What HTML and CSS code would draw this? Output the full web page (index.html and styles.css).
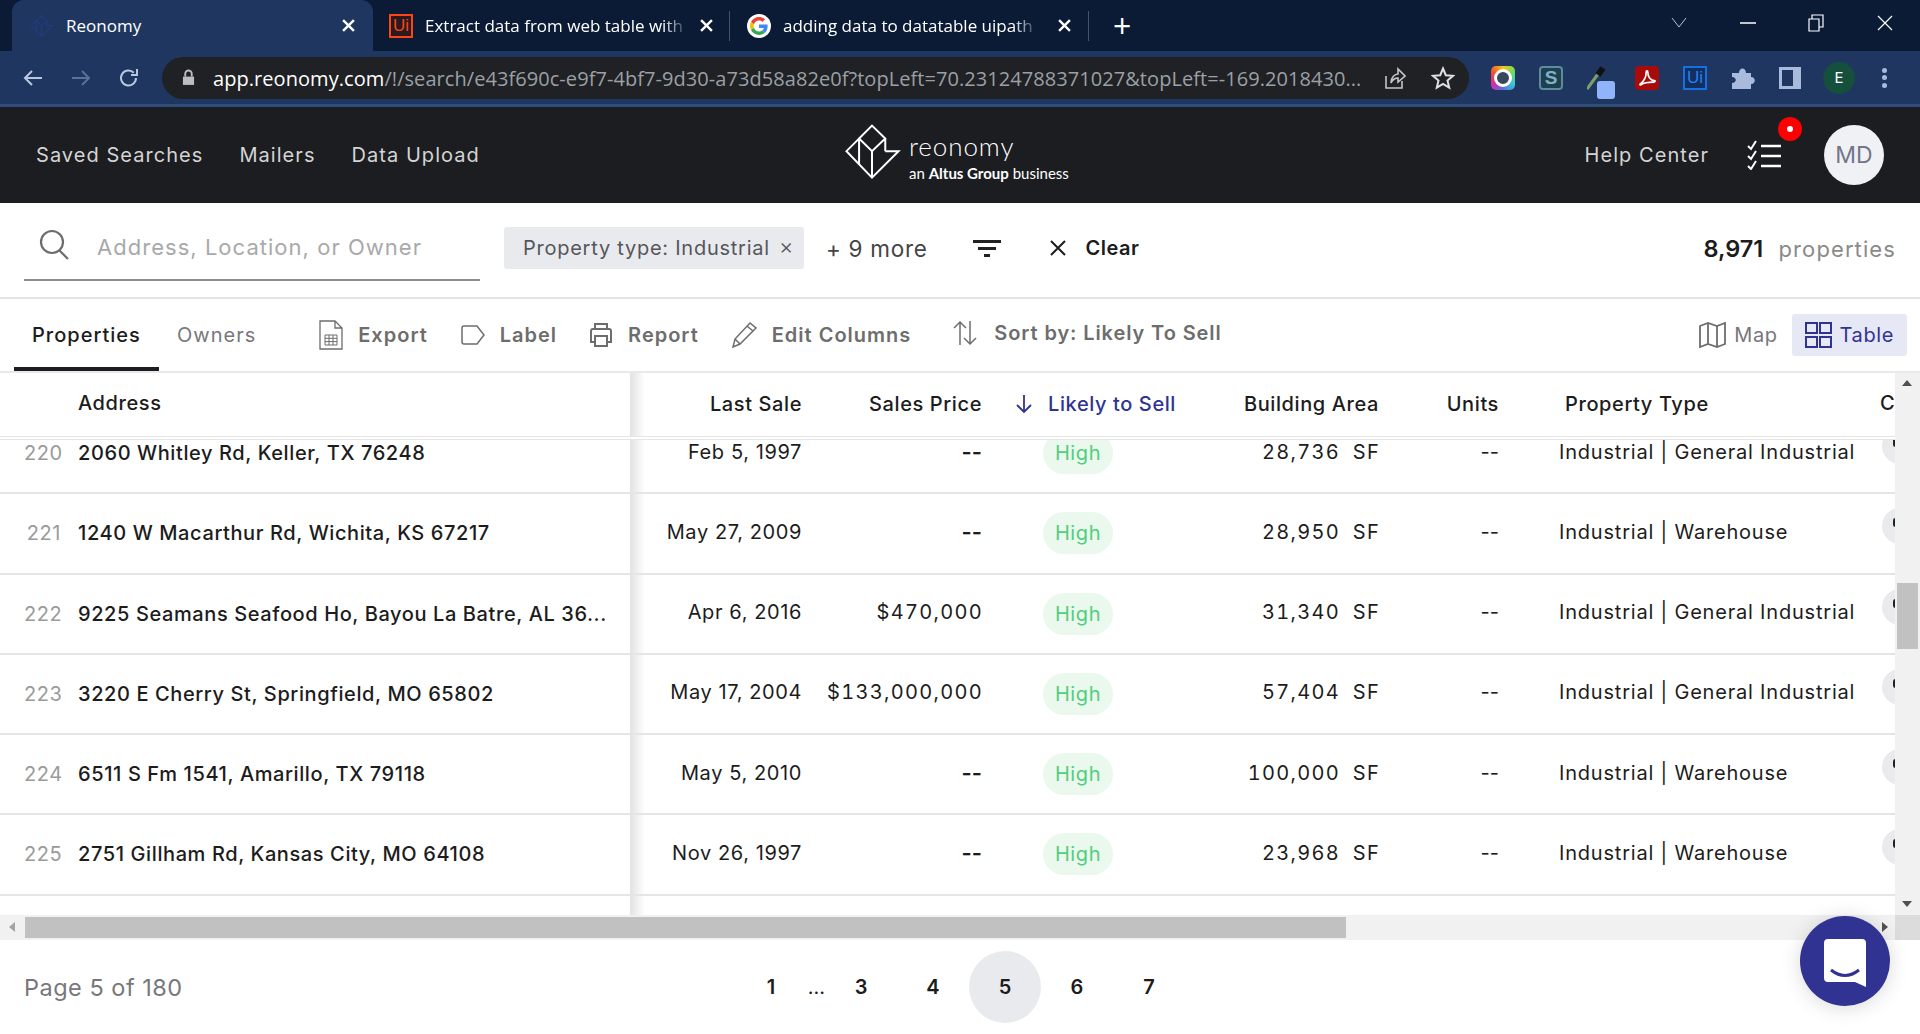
FILE: index.html
```html
<!DOCTYPE html>
<html>
<head>
    <title>Reonomy</title>
    <link rel="stylesheet" href="styles.css">
</head>
<body>
    <div class="tabstrip">
        <div class="tab tab-active">
            <svg class="fav" viewBox="70 40 180 175"><path d="M157 48L80 125L157 205L237 125H197M157 48L197 87L157 125L118 87ZM118 87V165M157 125V205M197 87V125" fill="none" stroke="#233a7c" stroke-width="9"/></svg>
            <span class="tab-title">Reonomy</span>
            <svg class="tab-x" viewBox="0 0 12 12"><path d="M1 1L11 11M11 1L1 11" stroke="#fff" stroke-width="2.200"/></svg>
        </div>
        <div class="tab tab-two">
            <span class="fav fav-ui">Ui</span>
            <span class="tab-title tab-fade">Extract data from web table with</span>
            <svg class="tab-x" viewBox="0 0 12 12"><path d="M1 1L11 11M11 1L1 11" stroke="#fff" stroke-width="2.200"/></svg>
        </div>
        <div class="tab tab-three">
            <span class="fav fav-g">
                <svg viewBox="0 0 48 48"><path fill="#EA4335" d="M24 9.500c3.500 0 6.700 1.200 9.200 3.600l6.900-6.900C35.900 2.400 30.500 0 24 0 14.600 0 6.500 5.400 2.600 13.200l8 6.200C12.400 13.700 17.700 9.500 24 9.500z"/><path fill="#4285F4" d="M47 24.500c0-1.600-.1-3.100-.4-4.500H24v9h12.900c-.6 3-2.200 5.500-4.700 7.200l7.700 6c4.500-4.200 7.100-10.300 7.100-17.700z"/><path fill="#FBBC05" d="M10.500 28.600c-.5-1.400-.8-3-.8-4.600s.3-3.200.8-4.600l-8-6.200C.9 16.500 0 20.100 0 24s.9 7.500 2.600 10.800l7.900-6.200z"/><path fill="#34A853" d="M24 48c6.500 0 11.900-2.100 15.900-5.800l-7.700-6c-2.200 1.400-4.900 2.300-8.200 2.300-6.300 0-11.600-4.200-13.500-9.900l-8 6.200C6.500 42.600 14.600 48 24 48z"/></svg>
            </span>
            <span class="tab-title tab-fade">adding data to datatable uipath</span>
            <svg class="tab-x" viewBox="0 0 12 12"><path d="M1 1L11 11M11 1L1 11" stroke="#fff" stroke-width="2.200"/></svg>
        </div>
        <span class="new-tab">+</span>
        <div class="win-controls">
            <svg width="16" height="12" viewBox="0 0 16 12"><path d="M1 1L8 10L15 1" fill="none" stroke="#b8c2d6" stroke-width="1"/></svg>
            <svg width="16" height="12" viewBox="0 0 16 12"><path d="M0 6H16" stroke="#fff" stroke-width="1.500"/></svg>
            <svg width="16" height="18" viewBox="0 0 16 18"><path d="M1 5H11V17H1ZM4 5V1H15V13H11" fill="none" stroke="#fff" stroke-width="1.200"/></svg>
            <svg width="16" height="16" viewBox="0 0 16 16"><path d="M1 1L15 15M15 1L1 15" stroke="#fff" stroke-width="1.200"/></svg>
        </div>
    </div>

    <div class="browserbar">
        <svg class="nav-ic" viewBox="0 0 24 24"><path d="M21 12H4M11 5L4 12L11 19" fill="none" stroke="#b9c8e2" stroke-width="2"/></svg>
        <svg class="nav-ic" viewBox="0 0 24 24"><path d="M3 12H20M13 5L20 12L13 19" fill="none" stroke="#5d7095" stroke-width="2"/></svg>
        <svg class="nav-ic" viewBox="0 0 24 24"><path d="M19 12A7.500 7.500 0 1 1 16.800 6.700M20 3V9H14" fill="none" stroke="#b9c8e2" stroke-width="2"/></svg>
        <div class="omnibox">
            <svg class="lock" viewBox="0 0 14 18"><path d="M1 8H13V17H1Z" fill="#bdbdbd"/><path d="M3.500 8V5A3.500 3.500 0 0 1 10.500 5V8" fill="none" stroke="#bdbdbd" stroke-width="2"/></svg>
            <span class="url"><b>app.reonomy.com</b>/!/search/e43f690c-e9f7-4bf7-9d30-a73d58a82e0f?topLeft=70.23124788371027&amp;topLeft=-169.2018430...</span>
            <svg class="omni-ic" viewBox="0 0 24 24"><path d="M4 10V22H20V15M9 17C9 11 13 8 16 8V3L23 10L16 16V12C13 12 11 13 9 17Z" fill="none" stroke="#c4c7c5" stroke-width="1.600"/></svg>
            <svg class="omni-ic" viewBox="0 0 24 24"><path d="M12 2.500L14.800 9.200L22 9.800L16.500 14.500L18.200 21.600L12 17.800L5.800 21.600L7.500 14.500L2 9.800L9.200 9.200Z" fill="none" stroke="#dfe1e5" stroke-width="2"/></svg>
        </div>
        <div class="ext-row">
            <span class="ext ext-lens"><i></i></span>
            <span class="ext ext-s">S</span>
            <span class="ext ext-drop">
                <svg viewBox="0 0 24 24"><path d="M0 23L11 8" stroke="#7d9f6a" stroke-width="3"/><path d="M11 9L16 2" stroke="#111" stroke-width="6"/></svg>
                <i></i>
            </span>
            <span class="ext ext-pdf"><svg viewBox="0 0 24 24"><path d="M4 19C8 16 11 10 11 5C11 3 13 3 13 5C13 10 16 15 21 15C22 15 22 17 20 17C15 17 9 17 5 20C4 21 3 20 4 19Z" fill="none" stroke="#fff" stroke-width="2"/></svg></span>
            <span class="ext ext-ui">Ui</span>
            <span class="ext ext-puzzle"><svg viewBox="0 0 24 24"><path d="M1 7H8C8 1 15 1 15 7H20V11C25 11 25 18 20 18V23H1V17C6 17 6 11 1 11Z" fill="#a9bbdc"/></svg></span>
            <span class="ext ext-panel"><i></i></span>
            <span class="ext ext-avatar">E</span>
            <span class="ext ext-dots"><i></i><i></i><i></i></span>
        </div>
    </div>

    <header class="app-head">
        <nav class="app-nav">
            <a>Saved Searches</a>
            <a>Mailers</a>
            <a>Data Upload</a>
        </nav>
        <div class="logo">
            <svg class="logo-mark" viewBox="70 40 180 175"><path d="M157 48L80 125L157 205L237 125H197M157 48L197 87L157 125L118 87ZM118 87V165M157 125V205M197 87V125" fill="none" stroke="#fff" stroke-width="6"/></svg>
            <div class="logo-text">
                <div class="logo-name">reonomy</div>
                <div class="logo-sub">an <b>Altus Group</b> business</div>
            </div>
        </div>
        <div class="head-right">
            <a class="help">Help Center</a>
            <span class="checklist">
                <svg width="36" height="30" viewBox="0 0 36 30"><path d="M1 6L4 9L9 1M1 16L4 19L9 11M1 26L4 29L9 21" fill="none" stroke="#fff" stroke-width="2"/><path d="M14 6H34M14 16H34M14 26H34" stroke="#fff" stroke-width="2.500"/></svg>
                <span class="red-dot"><i></i></span>
            </span>
            <span class="avatar">MD</span>
        </div>
    </header>

    <section class="searchbar">
        <div class="search-field">
            <svg class="search-ic" viewBox="0 0 32 32"><circle cx="14" cy="13" r="11" fill="none" stroke="#6d6d6d" stroke-width="2.200"/><path d="M21 21L30 30" stroke="#6d6d6d" stroke-width="2.200"/></svg>
            <span class="placeholder">Address, Location, or Owner</span>
        </div>
        <div class="chip">Property type: Industrial <span class="chip-x">&#215;</span></div>
        <span class="more">+ 9 more</span>
        <svg class="filter-ic" viewBox="0 0 28 17"><path d="M0 1.500H28M5 8.500H23M11 15.500H17" stroke="#222" stroke-width="3"/></svg>
        <a class="clear">
            <svg width="16" height="16" viewBox="0 0 16 16"><path d="M1 1L15 15M15 1L1 15" stroke="#1c1c1c" stroke-width="2"/></svg>
            Clear
        </a>
        <div class="count"><b>8,971</b> properties</div>
    </section>

    <section class="toolbar">
        <a class="view-tab view-tab-on">Properties</a>
        <a class="view-tab">Owners</a>
        <div class="actions">
            <a class="action">
                <svg width="24" height="30" viewBox="0 0 24 30"><path d="M1 1H16L23 8V29H1ZM16 1V8H23" fill="none" stroke="#6d6d6d" stroke-width="1.300"/><path d="M6 15H18V25H6ZM6 18.300H18M6 21.600H18M10 15V25M14 15V25" fill="none" stroke="#6d6d6d"/></svg>
                Export
            </a>
            <a class="action action-label">
                <svg width="24" height="20" viewBox="0 0 24 20"><path d="M3 1H16L23 10L16 19H3Q1 19 1 17V3Q1 1 3 1Z" fill="none" stroke="#6d6d6d" stroke-width="1.500"/></svg>
                Label
            </a>
            <a class="action action-report">
                <svg width="24" height="26" viewBox="0 0 24 26"><path d="M6 7V2H18V7M5 20H2V9Q2 7 4 7H20Q22 7 22 9V20H19M6 14H18V24H6Z" fill="none" stroke="#6d6d6d" stroke-width="2"/></svg>
                Report
            </a>
            <a class="action action-edit">
                <svg width="26" height="28" viewBox="0 0 26 28"><path d="M2 26L4 18L19 2L25 7L9 23ZM4 18L9 23M16 5L22 10" fill="none" stroke="#6d6d6d" stroke-width="1.500"/></svg>
                Edit Columns
            </a>
            <a class="action action-sort">
                <svg width="24" height="26" viewBox="0 0 24 26"><path d="M7 25V2M1 8L7 2L13 8M17 1V24M11 18L17 24L23 18" fill="none" stroke="#6d6d6d" stroke-width="1.500"/></svg>
                Sort by: Likely To Sell
            </a>
        </div>
        <div class="views">
            <a class="view-btn">
                <svg width="27" height="26" viewBox="0 0 27 26"><path d="M1 4L9 1L18 4L26 1V22L18 25L9 22L1 25ZM9 1V22M18 4V25" fill="none" stroke="#6d6d6d" stroke-width="1.800"/></svg>
                Map
            </a>
            <a class="view-btn view-btn-on">
                <svg width="27" height="26" viewBox="0 0 27 26"><path d="M1 1H12V11H1ZM15 1H26V11H15ZM1 15H12V25H1ZM15 15H26V25H15Z" fill="none" stroke="#303391" stroke-width="2"/></svg>
                Table
            </a>
        </div>
    </section>

    <section class="table-area">
        <div class="table-main">
            <div class="table">
                <div class="row thead">
                    <div class="cell-addr"><span class="addr-num"></span><span class="th-addr">Address</span></div>
                    <div class="c-right">Last Sale</div>
                    <div class="c-right">Sales Price</div>
                    <div class="c-likely">
                        <svg width="16" height="20" viewBox="0 0 16 20"><path d="M8 1V18M1 11L8 18L15 11" fill="none" stroke="#303391" stroke-width="1.800"/></svg>
                        Likely to Sell
                    </div>
                    <div class="c-right">Building Area</div>
                    <div class="c-right">Units</div>
                    <div class="c-type">Property Type</div>
                    <div class="c-last">C</div>
                </div>
                <div class="tbody">
                    <div class="tbody-inner">
                        <div class="row">
                            <div class="cell-addr"><span class="addr-num">220</span><span class="addr">2060 Whitley Rd, Keller, TX 76248</span></div>
                            <div class="c-right">Feb 5, 1997</div>
                            <div class="c-right nil">--</div>
                            <div class="c-badge"><span class="badge">High</span></div>
                            <div class="c-right mono">28,736 SF</div>
                            <div class="c-right dash">--</div>
                            <div class="c-type">Industrial | General Industrial</div>
                            <div class="c-last"><span class="stub"></span></div>
                        </div>
                        <div class="row">
                            <div class="cell-addr"><span class="addr-num">221</span><span class="addr">1240 W Macarthur Rd, Wichita, KS 67217</span></div>
                            <div class="c-right">May 27, 2009</div>
                            <div class="c-right nil">--</div>
                            <div class="c-badge"><span class="badge">High</span></div>
                            <div class="c-right mono">28,950 SF</div>
                            <div class="c-right dash">--</div>
                            <div class="c-type">Industrial | Warehouse</div>
                            <div class="c-last"><span class="stub"></span></div>
                        </div>
                        <div class="row">
                            <div class="cell-addr"><span class="addr-num">222</span><span class="addr">9225 Seamans Seafood Ho, Bayou La Batre, AL 36...</span></div>
                            <div class="c-right">Apr 6, 2016</div>
                            <div class="c-right mono">$470,000</div>
                            <div class="c-badge"><span class="badge">High</span></div>
                            <div class="c-right mono">31,340 SF</div>
                            <div class="c-right dash">--</div>
                            <div class="c-type">Industrial | General Industrial</div>
                            <div class="c-last"><span class="stub"></span></div>
                        </div>
                        <div class="row">
                            <div class="cell-addr"><span class="addr-num">223</span><span class="addr">3220 E Cherry St, Springfield, MO 65802</span></div>
                            <div class="c-right">May 17, 2004</div>
                            <div class="c-right mono">$133,000,000</div>
                            <div class="c-badge"><span class="badge">High</span></div>
                            <div class="c-right mono">57,404 SF</div>
                            <div class="c-right dash">--</div>
                            <div class="c-type">Industrial | General Industrial</div>
                            <div class="c-last"><span class="stub"></span></div>
                        </div>
                        <div class="row">
                            <div class="cell-addr"><span class="addr-num">224</span><span class="addr">6511 S Fm 1541, Amarillo, TX 79118</span></div>
                            <div class="c-right">May 5, 2010</div>
                            <div class="c-right nil">--</div>
                            <div class="c-badge"><span class="badge">High</span></div>
                            <div class="c-right mono">100,000 SF</div>
                            <div class="c-right dash">--</div>
                            <div class="c-type">Industrial | Warehouse</div>
                            <div class="c-last"><span class="stub"></span></div>
                        </div>
                        <div class="row">
                            <div class="cell-addr"><span class="addr-num">225</span><span class="addr">2751 Gillham Rd, Kansas City, MO 64108</span></div>
                            <div class="c-right">Nov 26, 1997</div>
                            <div class="c-right nil">--</div>
                            <div class="c-badge"><span class="badge">High</span></div>
                            <div class="c-right mono">23,968 SF</div>
                            <div class="c-right dash">--</div>
                            <div class="c-type">Industrial | Warehouse</div>
                            <div class="c-last"><span class="stub"></span></div>
                        </div>
                        <div class="row">
                            <div class="cell-addr"></div>
                        </div>
                    </div>
                </div>
            </div>
            <div class="vscroll">
                <i class="arrow-up"></i>
                <span class="vthumb"></span>
                <i class="arrow-down"></i>
            </div>
        </div>
        <div class="hscroll">
            <div class="htrack">
                <i class="arrow-left"></i>
                <span class="hthumb"></span>
                <i class="arrow-right"></i>
            </div>
            <span class="corner"></span>
        </div>
    </section>

    <footer class="pager-row">
        <div class="page-of">Page 5 of 180</div>
        <div class="pager">
            <a class="pg pg-first">1</a>
            <span class="pg-dots">...</span>
            <a class="pg">3</a>
            <a class="pg">4</a>
            <a class="pg pg-on">5</a>
            <a class="pg">6</a>
            <a class="pg">7</a>
        </div>
    </footer>

    <div class="chat-btn">
        <svg width="42" height="48" viewBox="0 0 42 48"><path d="M4 0H38Q42 0 42 4V48L31 43H4Q0 43 0 39V4Q0 0 4 0Z" fill="#fff"/><path d="M7 31Q21 42 35 31" fill="none" stroke="#303391" stroke-width="3"/></svg>
    </div>
</body>
</html>
```
FILE: styles.css
```css
* {
    box-sizing: border-box;
}

body {
    margin: 0;
    height: 1034px;
    overflow: hidden;
    font-family: Inter, "Liberation Sans", sans-serif;
    color: #1c1c1c;
    background-color: #fff;
    display: flex;
    flex-direction: column;
}

/* browser chrome */
.tabstrip {
    height: 51px;
    background-color: #0b1b36;
    display: flex;
    align-items: center;
    padding-left: 12px;
    color: #fff;
    font-family: "Open Sans", sans-serif;
    font-size: 17px;
}

.tab {
    height: 51px;
    display: flex;
    align-items: center;
    position: relative;
}

.tab-active {
    width: 361px;
    padding-left: 18px;
    background-color: #1f3760;
    border-radius: 12px 12px 0 0;
}

.tab-two {
    width: 357px;
    padding-left: 16px;
}

.tab-three {
    width: 359px;
    padding-left: 17px;
}

.tab-two::after,
.tab-three::after {
    content: "";
    position: absolute;
    right: 0;
    top: 11px;
    height: 30px;
    width: 1px;
    background-color: #45526b;
}

.fav {
    width: 24px;
    height: 24px;
    flex-shrink: 0;
}

.fav-ui {
    background-color: #2a1a20;
    border: 2px solid #fa4616;
    color: #fa4616;
    font: 17px/20px "Liberation Sans", sans-serif;
    text-align: center;
}

.fav-g {
    background-color: #fff;
    border-radius: 50%;
    padding: 3px;
    display: flex;
}

.tab-title {
    margin-left: 12px;
    width: 264px;
    white-space: nowrap;
    overflow: hidden;
}

.tab-fade {
    mask-image: linear-gradient(to right, #000 90%, transparent 100%);
    -webkit-mask-image: linear-gradient(to right, #000 90%, transparent 100%);
}

.tab-three .tab-title {
    width: 256px;
}

.tab-x {
    width: 13px;
    height: 13px;
    margin-left: 11px;
    flex-shrink: 0;
}

.tab-active .tab-x {
    margin-left: 12px;
}

.tab-three .tab-x {
    margin-left: 19px;
}

.new-tab {
    margin-left: 24px;
    font-size: 32px;
    line-height: 51px;
}

.win-controls {
    margin-left: auto;
    width: 222px;
    margin-right: 27px;
    display: flex;
    justify-content: space-between;
    align-items: center;
    margin-bottom: 6px;
}

.browserbar {
    height: 56px;
    background-color: #1f3760;
    border-bottom: 3px solid #2f4d7d;
    display: flex;
    align-items: center;
    padding-left: 21px;
}

.nav-ic {
    width: 24px;
    height: 24px;
    margin-right: 24px;
}

.omnibox {
    width: 1307px;
    height: 42px;
    margin-left: -3px;
    background-color: #202124;
    border-radius: 21px;
    display: flex;
    align-items: center;
    padding-left: 20px;
    font-family: "Open Sans", sans-serif;
    font-size: 20px;
    letter-spacing: 0.06px;
    color: #9aa0a6;
}

.lock {
    width: 13px;
    height: 17px;
    margin-right: 18px;
}

.url {
    width: 1159px;
    margin-top: 1px;
    white-space: nowrap;
    overflow: hidden;
}

.url b {
    font-weight: 400;
    color: #fff;
}

.omni-ic {
    width: 24px;
    height: 24px;
    margin-left: 10px;
}

.omni-ic + .omni-ic {
    margin-left: 25px;
}

.ext-row {
    display: flex;
    align-items: center;
    margin-left: 22px;
}

.ext {
    width: 24px;
    height: 24px;
    margin-right: 24px;
    position: relative;
    display: block;
}

.ext-lens {
    border-radius: 5px;
    background: conic-gradient(#f5c518, #6ddc5e, #38c6d9, #5a6ee0, #d42ea3, #ef5331, #f5c518);
    padding: 3px;
}

.ext-lens i {
    display: block;
    height: 18px;
    border-radius: 50%;
    border: 3px solid #fff;
    background-color: #37485e;
}

.ext-s {
    border: 2px solid #5d8c9c;
    border-radius: 4px;
    background-color: #1d3f50;
    color: #7fb1c1;
    font: 700 19px/20px "Liberation Sans", sans-serif;
    text-align: center;
}

.ext-drop i {
    position: absolute;
    left: 10px;
    top: 15px;
    width: 18px;
    height: 18px;
    border-radius: 3px;
    background-color: #8fb4f9;
}

.ext-pdf {
    background-color: #a90a0a;
    border-radius: 4px;
    padding: 2px;
}

.ext-ui {
    border: 2px solid #1a6fe0;
    background-color: #12305f;
    color: #2a7ff0;
    font: 17px/20px "Liberation Sans", sans-serif;
    text-align: center;
}

.ext-panel {
    height: 22px;
    width: 22px;
    margin-right: 25px;
    background-color: #a9bbdc;
    padding: 3px 8px 3px 3px;
}

.ext-panel i {
    display: block;
    height: 100%;
    background-color: #1f3760;
}

.ext-avatar {
    width: 32px;
    height: 32px;
    margin-left: -3px;
    margin-right: 27px;
    border-radius: 50%;
    background-color: #14503c;
    color: #fff;
    font-size: 15px;
    line-height: 32px;
    text-align: center;
}

.ext-dots {
    width: 6px;
    margin: 0;
    display: flex;
    flex-direction: column;
    justify-content: space-between;
    padding: 2px 0;
}

.ext-dots i {
    width: 5px;
    height: 5px;
    border-radius: 50%;
    background-color: #a9bbdc;
}

/* app header */
.app-head {
    height: 96px;
    background-color: #1c1d21;
    display: flex;
    align-items: center;
    padding-left: 36px;
    position: relative;
    color: #d4d4d4;
    font-size: 20px;
    letter-spacing: 1.05px;
}

.app-nav {
    display: flex;
    gap: 36px;
}

.logo {
    position: absolute;
    left: 843px;
    top: 16px;
    display: flex;
    gap: 6px;
    color: #fff;
    font-family: Lato, sans-serif;
    letter-spacing: 0;
}

.logo-mark {
    width: 60px;
    height: 58px;
}

.logo-name {
    font-size: 26px;
    font-weight: 300;
    line-height: 30px;
    letter-spacing: 0.9px;
    margin-top: 8px;
}

.logo-sub {
    font-size: 15px;
    line-height: 20px;
    margin-top: 2px;
}

.head-right {
    margin-left: auto;
    display: flex;
    align-items: center;
    padding-right: 36px;
}

.checklist {
    position: relative;
    margin-left: 38px;
    margin-right: 41px;
    display: flex;
}

.red-dot {
    position: absolute;
    left: 31px;
    top: -23px;
    width: 24px;
    height: 24px;
    border-radius: 50%;
    background-color: #f00;
    display: flex;
    align-items: center;
    justify-content: center;
}

.red-dot i {
    width: 6px;
    height: 6px;
    border-radius: 50%;
    background-color: #fff;
}

.avatar {
    width: 60px;
    height: 60px;
    border-radius: 50%;
    background-color: #f0f1f5;
    color: #72768a;
    font-size: 23px;
    line-height: 60px;
    text-align: center;
    letter-spacing: 0;
}

/* search row */
.searchbar {
    height: 96px;
    border-bottom: 2px solid #e3e3e3;
    display: flex;
    align-items: center;
    padding: 0 24px 4px 24px;
    font-size: 20px;
    letter-spacing: 0.7px;
}

.search-field {
    width: 456px;
    height: 78px;
    align-self: flex-start;
    border-bottom: 2px solid #8b8b8b;
    display: flex;
    align-items: center;
    padding: 12px 0 0 14px;
}

.search-ic {
    width: 32px;
    height: 32px;
    margin-top: -4px;
}

.placeholder {
    margin-left: 27px;
    color: #a9a9a9;
    font-weight: 400;
    font-size: 22px;
    letter-spacing: 1.030px;
}

.chip {
    margin-left: 24px;
    width: 300px;
    height: 42px;
    background-color: #e9eaee;
    border-radius: 3px;
    padding-left: 19px;
    line-height: 42px;
    color: #55565c;
    letter-spacing: 0.75px;
    white-space: nowrap;
    position: relative;
}

.chip-x {
    position: absolute;
    right: 10px;
    top: -2px;
    font-size: 22px;
    font-weight: 300;
}

.more {
    margin-left: 22px;
    font-size: 22.500px;
    color: #444;
}

.filter-ic {
    width: 28px;
    height: 17px;
    margin-left: 45px;
}

.clear {
    margin-left: 49px;
    display: flex;
    align-items: center;
    gap: 20px;
    font-weight: 600;
    font-size: 20px;
    letter-spacing: 0.5px;
}

.count {
    margin-left: auto;
    color: #8a8a8a;
    font-size: 22px;
    letter-spacing: 1.1px;
}

.count b {
    color: #1c1c1c;
    font-weight: 600;
    font-size: 23.500px;
    margin-right: 8px;
    letter-spacing: 0;
}

/* actions row */
.toolbar {
    height: 74px;
    border-bottom: 2px solid #e9e9e9;
    display: flex;
    align-items: center;
    padding-left: 14px;
    font-size: 20px;
    letter-spacing: 1px;
}

.view-tab {
    height: 72px;
    width: 145px;
    line-height: 72px;
    padding-left: 18px;
    color: #77777b;
}

.view-tab-on {
    color: #1c1c1c;
    font-weight: 500;
    border-bottom: 4px solid #1c1d21;
    line-height: 72px;
}

.view-tab + .view-tab {
    width: auto;
    padding-left: 18px;
}

.actions {
    display: flex;
    align-items: center;
    margin-left: 63px;
    color: #6d6d6d;
    font-weight: 600;
}

.action {
    display: flex;
    align-items: center;
    gap: 15px;
    margin-right: 33px;
}

.action-label,
.action-report {
    margin-right: 32px;
}

.action-edit {
    margin-right: 33px;
}

.action-sort {
    margin-left: 9px;
    margin-top: -4px;
    gap: 17px;
    letter-spacing: 0.9px;
}

.views {
    margin-left: auto;
    margin-right: 13px;
    display: flex;
    align-items: center;
    color: #77777b;
    letter-spacing: 0.6px;
}

.view-btn {
    height: 42px;
    display: flex;
    align-items: center;
    gap: 8px;
    padding: 0 12px;
}

.view-btn-on {
    background-color: #e6e8f5;
    color: #303391;
    border-radius: 3px;
    padding: 0 13px;
    margin-left: 2px;
}

/* table */
.table-area {
    height: 567px;
    display: flex;
    flex-direction: column;
}

.table-main {
    height: 542px;
    display: flex;
}

.table {
    width: 1895px;
    display: flex;
    flex-direction: column;
    font-size: 20px;
    letter-spacing: 0.6px;
}

.row {
    display: grid;
    grid-template-columns: 630px 172px 180px 217px 180px 120px 381px 15px;
    height: 80.250px;
    align-items: center;
    border-bottom: 2px solid #e5e5e5;
    white-space: nowrap;
}

.row > div {
    overflow: hidden;
}

.thead {
    height: 63px;
    border-bottom: none;
    font-weight: 500;
}

.tbody {
    flex: 1;
    overflow: hidden;
    border-top: 4px double #e5e5e5;
}

.tbody-inner {
    margin-top: -26px;
}

.row .cell-addr {
    height: 100%;
    display: flex;
    align-items: center;
    padding-left: 24px;
    font-weight: 500;
    position: relative;
    overflow: visible;
}

.cell-addr::after {
    content: "";
    position: absolute;
    left: 100%;
    top: 0;
    bottom: 0;
    width: 15px;
    background: linear-gradient(to right, #e2e2e2, #fff);
}

.addr-num {
    width: 37px;
    margin-right: 17px;
    text-align: right;
    color: #9a9a9a;
    font-weight: 400;
}

.th-addr {
    margin-top: -4px;
}

.c-right {
    text-align: right;
    margin-top: -3px;
}

.thead .c-right {
    margin-top: -2px;
}

.mono {
    font-variant-numeric: tabular-nums;
    letter-spacing: 1.300px;
    word-spacing: 6px;
    margin-right: -1px;
}

.nil {
    font-size: 22px;
    font-weight: 600;
    letter-spacing: 0;
}

.dash {
    letter-spacing: 0;
}

.c-likely {
    padding-left: 34px;
    margin-top: -2px;
    color: #303391;
    display: flex;
    align-items: center;
    gap: 16px;
}

.c-badge {
    padding-left: 61px;
}

.badge {
    display: block;
    width: 70px;
    height: 42px;
    border-radius: 21px;
    background-color: #eaf8ee;
    color: #4fcf7c;
    line-height: 42px;
    text-align: center;
}

.c-type {
    padding-left: 60px;
    margin-top: -3px;
    letter-spacing: 0.8px;
}

.thead .c-type {
    padding-left: 66px;
    margin-top: -2px;
    letter-spacing: 0.6px;
}

.row > .c-last {
    height: 60px;
    line-height: 60px;
}

.thead .c-last {
    margin-top: -4px;
}

.stub {
    display: block;
    width: 36px;
    height: 36px;
    margin: 5px 0 0 2px;
    border-radius: 50%;
    background-color: #e9eaee;
    position: relative;
}

.stub::after {
    content: "";
    position: absolute;
    left: 11px;
    top: 10px;
    width: 5px;
    height: 9px;
    border-radius: 3px;
    background-color: #222;
}

.vscroll {
    width: 25px;
    background-color: #f1f1f1;
    position: relative;
}

.vthumb {
    position: absolute;
    left: 2px;
    right: 2px;
    top: 210px;
    height: 66px;
    background-color: #c1c1c1;
}

.arrow-up,
.arrow-down {
    position: absolute;
    left: 7px;
    border-left: 5.500px solid transparent;
    border-right: 5.500px solid transparent;
}

.arrow-up {
    top: 7px;
    border-bottom: 6px solid #505050;
}

.arrow-down {
    bottom: 8px;
    border-top: 6px solid #505050;
}

.hscroll {
    height: 25px;
    display: flex;
}

.htrack {
    flex: 1;
    background-color: #f1f1f1;
    position: relative;
    padding: 2px 0 2px 25px;
}

.hthumb {
    display: block;
    width: 1321px;
    height: 21px;
    background-color: #c1c1c1;
}

.arrow-left,
.arrow-right {
    position: absolute;
    top: 7px;
    border-top: 5.500px solid transparent;
    border-bottom: 5.500px solid transparent;
}

.arrow-left {
    left: 9px;
    border-right: 6px solid #a3a3a3;
}

.arrow-right {
    right: 7px;
    border-left: 6px solid #505050;
}

.corner {
    width: 25px;
    background-color: #dcdcdc;
}

/* footer */
.pager-row {
    flex: 1;
    display: flex;
    align-items: center;
    padding-left: 24px;
    font-size: 23.500px;
}

.page-of {
    width: 720px;
    color: #77777b;
    letter-spacing: 0.5px;
}

.pager {
    display: flex;
    align-items: center;
    font-size: 20px;
    font-weight: 600;
}

.pg {
    width: 72px;
    height: 72px;
    line-height: 72px;
    text-align: center;
    border-radius: 50%;
}

.pg-first {
    width: 54px;
}

.pg-dots {
    width: 27px;
    text-align: right;
    font-weight: 400;
}

.pg-on {
    background-color: #e9eaee;
}

.chat-btn {
    position: fixed;
    left: 1800px;
    top: 916px;
    width: 90px;
    height: 90px;
    border-radius: 50%;
    background-color: #303391;
    box-shadow: 0 2px 20px rgba(0, 0, 0, 0.15);
    display: flex;
    align-items: center;
    justify-content: center;
    padding-top: 4px;
}
```
